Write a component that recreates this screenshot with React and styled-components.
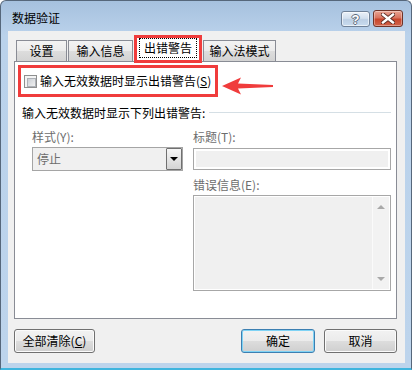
import React from "react";
import styled, { createGlobalStyle, css } from "styled-components";

const GlobalStyle = createGlobalStyle`
  * { box-sizing: border-box; }
  body {
    margin: 0;
    background: #ffffff;
    font-family: "Noto Sans CJK SC", "Noto Sans", sans-serif;
    font-size: 12px;
  }
`;

const RED = "#f03c3c";

const Window = styled.div`
  width: 412px;
  height: 370px;
  display: flex;
  flex-direction: column;
  border: 1px solid #56677b;
  border-bottom: 2px solid #3fb5de;
  border-radius: 6px 6px 0 0;
  background: linear-gradient(#a6c1de 0px, #bad2eb 34px, #bdd4ec 100%);
`;

const TitleBar = styled.div`
  height: 30px;
  flex-shrink: 0;
  display: flex;
  align-items: flex-start;
  padding: 9px 8px 0 11px;
`;

const Title = styled.div`
  flex: 1;
  line-height: 16px;
  color: #000;
`;

const CaptionButton = styled.div`
  height: ${(p) => p.$h}px;
  width: ${(p) => p.$w}px;
  margin-top: ${(p) => p.$top || 0}px;
  margin-left: 3px;
  border-radius: 3px;
  display: flex;
  align-items: center;
  justify-content: center;
  ${(p) =>
    p.$close
      ? css`
          border: 1px solid #6f3328;
          background: linear-gradient(#e9a594 0%, #d9735f 45%, #c8452b 55%, #d1654c 100%);
          box-shadow: inset 0 0 0 1px rgba(255, 255, 255, 0.35);
        `
      : css`
          border: 1px solid #6f8197;
          background: linear-gradient(#eaf1f9 0%, #d3e0ee 45%, #bccfe4 55%, #c9dcef 100%);
          box-shadow: inset 0 0 0 1px rgba(255, 255, 255, 0.6);
        `}
`;

const HelpGlyph = styled.span`
  font-family: "Liberation Sans", Arial, sans-serif;
  font-weight: bold;
  font-size: 13px;
  line-height: 13px;
  color: #ffffff;
  text-shadow: 1px 0 0 #5c6b7c, -1px 0 0 #5c6b7c, 0 1px 0 #5c6b7c, 0 -1px 0 #5c6b7c;
`;

const Client = styled.div`
  flex: 1;
  margin: 0 6px 5px 7px;
  background: #f0f0f0;
  display: flex;
  flex-direction: column;
  padding: 9px 8px 10px 6px;
`;

const TabStrip = styled.div`
  height: 21px;
  flex-shrink: 0;
  display: flex;
  align-items: flex-end;
  gap: 1px;
  padding-left: 2px;
  position: relative;
  z-index: 1;
`;

const Tab = styled.div`
  width: ${(p) => p.$w}px;
  height: 21px;
  border: 1px solid #898c95;
  border-bottom: none;
  background: linear-gradient(#f3f3f3 0%, #ebebeb 50%, #dddddd 50%, #d3d3d3 100%);
  text-align: center;
  line-height: 20px;
  color: #000;
`;

const ActiveTab = styled.div`
  width: ${(p) => p.$w}px;
  height: 28px;
  margin-bottom: -2px;
  border: 3px solid ${RED};
  background: #ffffff;
  display: flex;
  justify-content: center;
`;

const FocusLabel = styled.div`
  width: 58px;
  height: 20px;
  border: 1px dotted #000;
  text-align: center;
  line-height: 18px;
  color: #000;
`;

const Panel = styled.div`
  flex: 1;
  border: 1px solid #898c95;
  background: #ffffff;
  padding: 3px 5px 0 3px;
`;

const AlertRow = styled.div`
  display: flex;
  align-items: flex-start;
`;

const CheckBox = styled.label`
  width: 200px;
  height: 32px;
  border: 3px solid ${RED};
  display: flex;
  align-items: center;
  gap: 3px;
  padding-left: 3px;
  color: #000;
  line-height: 16px;
`;

const Box = styled.span`
  width: 13px;
  height: 13px;
  flex-shrink: 0;
  border: 1px solid #8e8f8f;
  background: #f4f4f4;
  padding: 2px;
  &::after {
    content: "";
    display: block;
    width: 100%;
    height: 100%;
    border: 1px solid #aeb2b8;
    background: linear-gradient(135deg, #cbcfd5, #f0f0f0);
  }
`;

const Arrow = styled.svg`
  margin: 12px 0 0 4px;
  flex-shrink: 0;
`;

const SectionHead = styled.div`
  display: flex;
  align-items: center;
  gap: 4px;
  margin: 8px 0 0 4px;
  line-height: 16px;
  color: #000;
`;

const Rule = styled.div`
  flex: 1;
  height: 2px;
  border-top: 1px solid #d5dfe5;
  border-bottom: 1px solid #ffffff;
`;

const Fields = styled.div`
  display: grid;
  grid-template-columns: 151px 198px;
  column-gap: 10px;
  margin: 8px 0 0 14px;
`;

const Column = styled.div`
  display: flex;
  flex-direction: column;
`;

const FieldLabel = styled.div`
  line-height: 16px;
  color: #6d6d6d;
  margin-top: ${(p) => p.$gap || 0}px;
`;

const Select = styled.div`
  margin-top: 2px;
  height: 24px;
  border: 1px solid #a5a5a5;
  background: #f0f0f0;
  display: flex;
  align-items: stretch;
`;

const SelectText = styled.div`
  flex: 1;
  padding-left: 4px;
  line-height: 22px;
  color: #6d6d6d;
`;

const DropButton = styled.div`
  width: 16px;
  border: 1px solid #707070;
  border-radius: 1px;
  background: linear-gradient(#f6f6f6, #d4d4d4);
  display: flex;
  align-items: center;
  justify-content: center;
  &::after {
    content: "";
    border-left: 4px solid transparent;
    border-right: 4px solid transparent;
    border-top: 4px solid #000;
  }
`;

const Input = styled.div`
  margin-top: 3px;
  height: 22px;
  border: 1px solid #a7a7a7;
  background: #f0f0f0;
  box-shadow: inset 0 0 0 2px #ffffff;
`;

const TextArea = styled.div`
  margin-top: 2px;
  height: 96px;
  border: 1px solid #a7a7a7;
  background: #f0f0f0;
  box-shadow: inset 0 0 0 1px #ffffff;
  padding: 1px;
  display: flex;
  justify-content: flex-end;
`;

const ScrollBar = styled.div`
  width: 17px;
  border-left: 1px solid #fafafa;
  background: #f2f2f2;
  display: flex;
  flex-direction: column;
  align-items: center;
  justify-content: space-between;
  padding: 8px 0;
`;

const ScrollArrow = styled.span`
  width: 0;
  height: 0;
  border-left: 4px solid transparent;
  border-right: 4px solid transparent;
  ${(p) =>
    p.$down
      ? css`border-top: 4px solid #a9a9a9;`
      : css`border-bottom: 4px solid #a9a9a9;`}
`;

const Footer = styled.div`
  height: 24px;
  flex-shrink: 0;
  margin-top: 10px;
  display: flex;
  justify-content: space-between;
`;

const ButtonGroup = styled.div`
  display: flex;
  gap: 9px;
`;

const Button = styled.div`
  width: ${(p) => p.$w}px;
  height: 24px;
  border: 1px solid ${(p) => (p.$default ? "#3c7fb1" : "#707070")};
  border-radius: 3px;
  background: linear-gradient(#f2f2f2 0%, #ebebeb 50%, #dddddd 50%, #cfcfcf 100%);
  box-shadow: inset 0 0 0 1px ${(p) => (p.$default ? "#7fd3f5" : "#fbfbfb")};
  text-align: center;
  line-height: 22px;
  color: #000;
`;

const Key = styled.span`
  text-decoration: underline;
`;

export default function App() {
  return (
    <>
      <GlobalStyle />
      <Window>
        <TitleBar>
          <Title>数据验证</Title>
          <CaptionButton $w={29} $h={16} $top={1}>
            <HelpGlyph>?</HelpGlyph>
          </CaptionButton>
          <CaptionButton $w={30} $h={17} $close>
            <svg width="14" height="11" viewBox="0 0 14 11">
              <path d="M2 1.5 L12 9.5 M12 1.5 L2 9.5" stroke="#5a2a22" strokeWidth="4.2" strokeLinecap="square" />
              <path d="M2 1.5 L12 9.5 M12 1.5 L2 9.5" stroke="#ffffff" strokeWidth="2.4" strokeLinecap="square" />
            </svg>
          </CaptionButton>
        </TitleBar>
        <Client>
          <TabStrip>
            <Tab $w={51}>设置</Tab>
            <Tab $w={65}>输入信息</Tab>
            <ActiveTab $w={68}>
              <FocusLabel>出错警告</FocusLabel>
            </ActiveTab>
            <Tab $w={73}>输入法模式</Tab>
          </TabStrip>
          <Panel>
            <AlertRow>
              <CheckBox>
                <Box />
                <span>
                  输入无效数据时显示出错警告(<Key>S</Key>)
                </span>
              </CheckBox>
              <Arrow width="52" height="18" viewBox="0 0 52 18">
                <path d="M0 9 L19 0.5 L16 6.5 L51 8 L51 10 L16 11.5 L19 17.5 Z" fill={RED} />
              </Arrow>
            </AlertRow>
            <SectionHead>
              <span>输入无效数据时显示下列出错警告:</span>
              <Rule />
            </SectionHead>
            <Fields>
              <Column>
                <FieldLabel>样式(Y):</FieldLabel>
                <Select>
                  <SelectText>停止</SelectText>
                  <DropButton />
                </Select>
              </Column>
              <Column>
                <FieldLabel>标题(T):</FieldLabel>
                <Input />
                <FieldLabel $gap={7}>错误信息(E):</FieldLabel>
                <TextArea>
                  <ScrollBar>
                    <ScrollArrow />
                    <ScrollArrow $down />
                  </ScrollBar>
                </TextArea>
              </Column>
            </Fields>
          </Panel>
          <Footer>
            <Button $w={81}>
              全部清除(<Key>C</Key>)
            </Button>
            <ButtonGroup>
              <Button $w={74} $default>确定</Button>
              <Button $w={73}>取消</Button>
            </ButtonGroup>
          </Footer>
        </Client>
      </Window>
    </>
  );
}
